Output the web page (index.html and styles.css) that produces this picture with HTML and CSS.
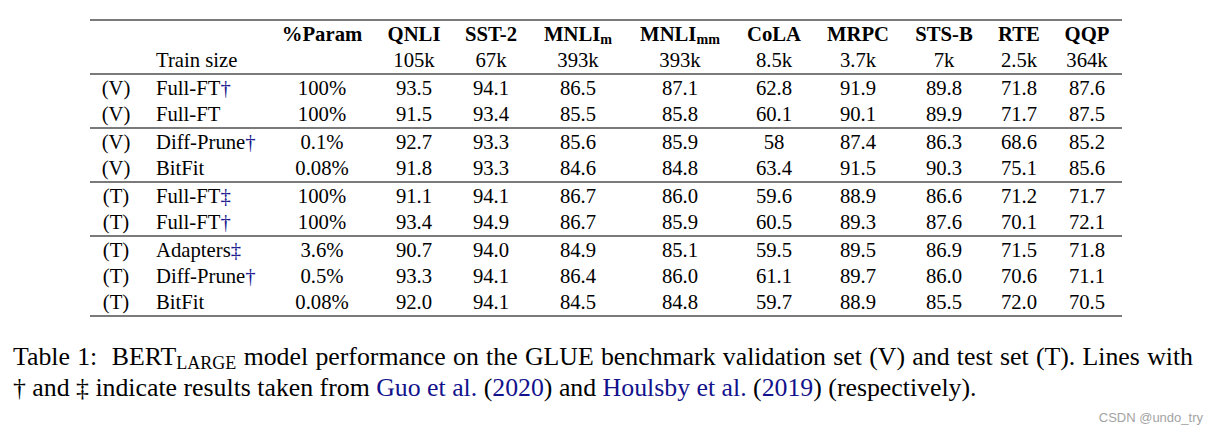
FILE: index.html
```html
<!DOCTYPE html>
<html>
<head>
<meta charset="utf-8">
<link rel="stylesheet" href="styles.css">
</head>
<body>
<div class="page">
  <div class="table">
    <div class="rule"></div>
    <div class="row head">
      <div></div><div class="m"></div>
      <div>%Param</div><div>QNLI</div><div>SST-2</div>
      <div>MNLI<sub>m</sub></div><div>MNLI<sub>mm</sub></div>
      <div>CoLA</div><div>MRPC</div><div>STS-B</div><div>RTE</div><div>QQP</div>
    </div>
    <div class="row">
      <div></div><div class="m">Train size</div>
      <div></div><div>105k</div><div>67k</div><div>393k</div><div>393k</div>
      <div>8.5k</div><div>3.7k</div><div>7k</div><div>2.5k</div><div>364k</div>
    </div>
    <div class="rule"></div>
    <div class="row">
      <div>(V)</div><div class="m">Full-FT<span class="ref">†</span></div>
      <div>100%</div><div>93.5</div><div>94.1</div><div>86.5</div><div>87.1</div>
      <div>62.8</div><div>91.9</div><div>89.8</div><div>71.8</div><div>87.6</div>
    </div>
    <div class="row">
      <div>(V)</div><div class="m">Full-FT</div>
      <div>100%</div><div>91.5</div><div>93.4</div><div>85.5</div><div>85.8</div>
      <div>60.1</div><div>90.1</div><div>89.9</div><div>71.7</div><div>87.5</div>
    </div>
    <div class="rule"></div>
    <div class="row">
      <div>(V)</div><div class="m">Diff-Prune<span class="ref">†</span></div>
      <div>0.1%</div><div>92.7</div><div>93.3</div><div>85.6</div><div>85.9</div>
      <div>58</div><div>87.4</div><div>86.3</div><div>68.6</div><div>85.2</div>
    </div>
    <div class="row">
      <div>(V)</div><div class="m">BitFit</div>
      <div>0.08%</div><div>91.8</div><div>93.3</div><div>84.6</div><div>84.8</div>
      <div>63.4</div><div>91.5</div><div>90.3</div><div>75.1</div><div>85.6</div>
    </div>
    <div class="rule"></div>
    <div class="row">
      <div>(T)</div><div class="m">Full-FT<span class="ref">‡</span></div>
      <div>100%</div><div>91.1</div><div>94.1</div><div>86.7</div><div>86.0</div>
      <div>59.6</div><div>88.9</div><div>86.6</div><div>71.2</div><div>71.7</div>
    </div>
    <div class="row">
      <div>(T)</div><div class="m">Full-FT<span class="ref">†</span></div>
      <div>100%</div><div>93.4</div><div>94.9</div><div>86.7</div><div>85.9</div>
      <div>60.5</div><div>89.3</div><div>87.6</div><div>70.1</div><div>72.1</div>
    </div>
    <div class="rule"></div>
    <div class="row">
      <div>(T)</div><div class="m">Adapters<span class="ref">‡</span></div>
      <div>3.6%</div><div>90.7</div><div>94.0</div><div>84.9</div><div>85.1</div>
      <div>59.5</div><div>89.5</div><div>86.9</div><div>71.5</div><div>71.8</div>
    </div>
    <div class="row">
      <div>(T)</div><div class="m">Diff-Prune<span class="ref">†</span></div>
      <div>0.5%</div><div>93.3</div><div>94.1</div><div>86.4</div><div>86.0</div>
      <div>61.1</div><div>89.7</div><div>86.0</div><div>70.6</div><div>71.1</div>
    </div>
    <div class="row">
      <div>(T)</div><div class="m">BitFit</div>
      <div>0.08%</div><div>92.0</div><div>94.1</div><div>84.5</div><div>84.8</div>
      <div>59.7</div><div>88.9</div><div>85.5</div><div>72.0</div><div>70.5</div>
    </div>
    <div class="rule"></div>
  </div>
  <div class="caption">
    <div class="line1">Table 1:&nbsp; BERT<span class="sub">LARGE</span> model performance on the GLUE benchmark validation set (V) and test set (T). Lines with</div>
    <div class="line2">† and ‡ indicate results taken from <span class="link">Guo et al.</span> (<span class="link">2020</span>) and <span class="link">Houlsby et al.</span> (<span class="link">2019</span>) (respectively).</div>
  </div>
  <div class="watermark">CSDN @undo_try</div>
</div>
</body>
</html>
```
FILE: styles.css
```css
html, body {
  margin: 0;
  padding: 0;
  background: #ffffff;
}
.page {
  position: relative;
  width: 1218px;
  height: 435px;
  font-family: "Liberation Serif", "Times New Roman", serif;
  color: #000;
}
.table {
  width: 1032px;
  margin-left: 90px;
  padding-top: 19px;
  font-size: 20.7px;
}
.rule {
  height: 2px;
  background: #7a7a7a;
}
.row {
  display: grid;
  grid-template-columns: 52px 126px 108px 76px 78px 96px 108px 80px 88px 84px 66px 70px;
  height: 26px;
  line-height: 26px;
  text-align: center;
  white-space: nowrap;
}
.row .m {
  text-align: left;
  padding-left: 14px;
}
.head {
  font-weight: bold;
}
.head sub {
  font-size: 0.68em;
  vertical-align: -0.22em;
  line-height: 0;
}
.ref {
  color: #1a1a8e;
}
.caption {
  width: 1180px;
  margin-left: 13px;
  margin-top: 24px;
  font-size: 25.8px;
  line-height: 31px;
}
.line1 {
  text-align: justify;
  text-align-last: justify;
}
.sub {
  font-size: 0.7em;
  vertical-align: -0.22em;
  line-height: 0;
}
.link {
  color: #12128c;
}
.watermark {
  position: absolute;
  right: 15px;
  top: 410px;
  font-family: "Liberation Sans", Arial, sans-serif;
  font-size: 13px;
  line-height: 16px;
  color: #a3a3a3;
}
```
